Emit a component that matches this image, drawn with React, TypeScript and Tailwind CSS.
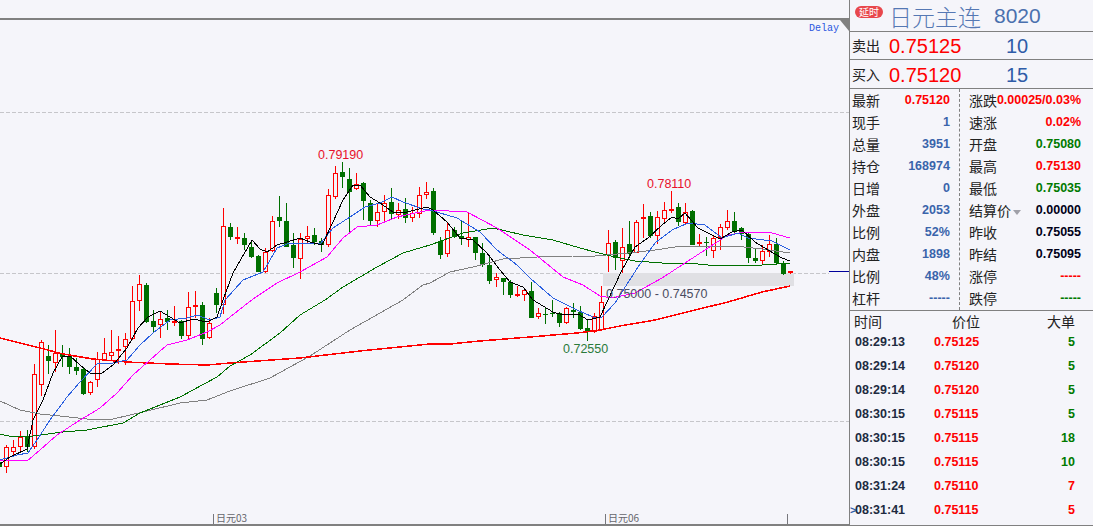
import React from "react";

// [high, bodyTop, bodyBottom, low, up]
const candles: number[][] = [
  [460, 462, 467, 469, 0], [445, 447, 467, 473, 1], [440, 447, 452, 457, 1], [431, 437, 447, 453, 1],
  [430, 436, 447, 452, 0], [364, 374, 447, 449, 1], [340, 342, 385, 396, 1], [345, 356, 361, 374, 0],
  [330, 353, 363, 372, 1], [345, 353, 357, 367, 0], [348, 356, 367, 374, 0], [358, 367, 371, 375, 0],
  [368, 369, 394, 395, 0], [381, 382, 393, 395, 1], [352, 359, 380, 387, 1], [338, 353, 360, 361, 1],
  [330, 352, 356, 360, 1], [336, 349, 350, 364, 1], [333, 339, 347, 365, 1], [286, 301, 339, 340, 1],
  [275, 284, 301, 311, 1], [283, 285, 322, 323, 0], [310, 321, 327, 332, 0], [312, 319, 325, 338, 1],
  [310, 318, 322, 330, 0], [306, 321, 322, 326, 1], [320, 321, 336, 339, 0], [292, 307, 336, 340, 1],
  [291, 305, 306, 318, 1], [302, 305, 339, 345, 0], [318, 323, 338, 339, 1], [288, 293, 305, 313, 0],
  [208, 226, 305, 314, 1], [223, 227, 237, 240, 0], [227, 237, 239, 244, 1], [233, 238, 245, 250, 0],
  [242, 247, 257, 258, 0], [255, 256, 272, 272, 0], [248, 252, 272, 273, 1], [216, 221, 251, 252, 1],
  [196, 217, 221, 227, 0], [203, 221, 247, 247, 0], [233, 245, 258, 268, 0], [233, 239, 259, 279, 1],
  [226, 236, 239, 244, 1], [228, 235, 242, 245, 0], [238, 241, 245, 252, 0], [189, 195, 245, 247, 1],
  [166, 173, 197, 199, 1], [162, 172, 177, 188, 0], [168, 179, 192, 233, 0], [173, 184, 189, 190, 1],
  [182, 183, 201, 220, 0], [200, 203, 221, 225, 0], [203, 212, 221, 227, 1], [195, 203, 212, 221, 1],
  [188, 202, 214, 220, 0], [203, 210, 215, 219, 1], [198, 209, 218, 223, 0], [207, 213, 218, 222, 1],
  [187, 195, 214, 218, 1], [182, 192, 195, 199, 1], [188, 191, 233, 235, 0], [237, 241, 255, 259, 0],
  [222, 230, 254, 257, 1], [227, 230, 237, 238, 0], [220, 236, 239, 245, 0], [213, 237, 240, 247, 1],
  [237, 237, 253, 260, 0], [243, 253, 265, 267, 0], [255, 265, 281, 284, 0], [273, 277, 280, 287, 1],
  [278, 278, 282, 295, 0], [280, 282, 295, 298, 0], [286, 294, 296, 297, 1], [288, 290, 295, 301, 1],
  [282, 291, 318, 318, 0], [308, 313, 317, 319, 1], [307, 314, 315, 324, 0], [300, 313, 314, 317, 0],
  [312, 313, 323, 327, 0], [307, 308, 323, 324, 1], [303, 310, 312, 318, 0], [306, 312, 329, 330, 0],
  [320, 328, 332, 341, 0], [313, 316, 332, 333, 1], [286, 302, 330, 331, 1], [230, 243, 255, 272, 1],
  [240, 242, 258, 270, 0], [228, 247, 261, 273, 1], [221, 244, 254, 257, 0], [220, 222, 253, 253, 1],
  [204, 217, 219, 238, 1], [212, 216, 236, 238, 0], [211, 217, 236, 244, 1], [202, 210, 219, 223, 1],
  [191, 209, 211, 213, 1], [203, 207, 222, 226, 0], [203, 212, 223, 225, 1], [210, 211, 245, 245, 0],
  [234, 242, 243, 246, 1], [237, 242, 243, 256, 0], [235, 238, 251, 258, 1], [224, 227, 238, 250, 1],
  [210, 221, 228, 230, 1], [212, 221, 232, 233, 0], [227, 228, 234, 240, 0], [232, 234, 258, 263, 0],
  [248, 258, 261, 263, 0], [245, 251, 261, 265, 1], [235, 244, 252, 257, 1], [238, 244, 263, 265, 0],
  [261, 263, 274, 275, 0], [271, 271, 272, 274, 1],
];

const maBlack = "0,464 10,457 27,449 33,420 43,400 53,373 62,357 70,356 80,365 90,373 102,373 113,365 127,348 138,328 148,317 160,311 170,317 180,323 193,319 207,322 217,317 223,300 233,273 252,240 260,249 267,252 277,245 287,242 300,238 310,242 322,245 333,222 343,200 353,185 360,185 370,197 380,203 393,212 407,212 427,207 433,210 447,222 460,238 473,240 487,253 500,270 510,282 523,287 533,300 553,312 563,315 578,314 588,320 600,317 622,270 635,247 648,238 662,225 672,217 678,219 685,213 698,228 720,239 732,232 742,230 755,242 768,250 782,258 790,261";
const maBlue = "0,460 17,455 28,453 37,440 50,420 67,397 80,382 97,364 113,363 127,360 140,345 153,333 170,320 187,318 197,315 210,320 220,317 225,300 243,280 263,272 277,248 290,243 320,244 333,228 350,217 365,207 380,203 392,197 403,202 423,209 430,210 457,218 480,232 497,250 517,265 530,278 553,298 577,310 593,317 602,317 615,303 638,267 655,243 672,230 688,223 705,225 722,238 738,233 748,238 772,241 790,250";
const maPink = "0,460 27,461 40,450 57,435 77,422 100,408 117,393 133,375 150,360 167,345 187,340 207,332 220,325 230,317 253,299 277,283 300,272 327,257 343,238 357,227 377,225 397,217 420,212 430,210 467,212 497,228 530,250 563,277 583,285 600,296 612,298 635,293 662,278 682,265 708,248 728,235 745,232 772,233 790,238";
const maGreen = "0,434 13,437 33,436 63,432 87,430 123,423 140,413 180,397 217,377 230,366 250,355 280,333 300,315 325,300 343,287 377,267 403,253 423,247 430,245 463,233 493,228 523,235 553,240 580,248 595,252 615,257 635,261 662,263 688,263 708,265 728,265 762,265 790,263";
const maGray = "0,401 20,410 40,414 60,416 87,419 113,419 143,412 180,403 207,400 230,391 270,378 310,356 350,330 403,300 423,285 430,283 450,272 473,267 503,259 537,257 573,256 595,256 628,253 655,250 682,246 708,247 735,246 762,249 790,253";
const maRed = "0,338 20,343 40,348 63,354 93,359 127,362 170,364 207,365 230,363 300,358 360,351 430,344 450,344 480,341 530,337 577,333 600,330 620,326 655,320 695,310 728,302 762,292 790,286";

const Candle = ({ c, i }: { c: number[]; i: number }) => {
  const [high, top, bottom, low, up] = c;
  const x = -1 + 7 * i;
  const color = up ? "#ff0000" : "#006f00";
  return (
    <g shapeRendering="crispEdges">
      <rect x={x} y={high} width={1} height={low - high} fill={color} />
      {up ? (
        <rect x={x - 1.5} y={top + 0.5} width={4} height={Math.max(bottom - top - 1, 1)} fill="#f5f5fa" stroke={color} />
      ) : (
        <rect x={x - 2} y={top} width={5} height={Math.max(bottom - top, 1)} fill={color} />
      )}
    </g>
  );
};

const RED = "text-[#ff0000]";
const BLUE = "text-[#3a64ab]";
const GREEN = "text-[#007a00]";
const DARK = "text-[#000018]";

const leftRows = [
  ["最新", "0.75120", RED],
  ["现手", "1", BLUE],
  ["总量", "3951", BLUE],
  ["持仓", "168974", BLUE],
  ["日增", "0", BLUE],
  ["外盘", "2053", BLUE],
  ["比例", "52%", BLUE],
  ["内盘", "1898", BLUE],
  ["比例", "48%", BLUE],
  ["杠杆", "-----", BLUE],
];

const rightRows = [
  ["涨跌", "0.00025/0.03%", RED],
  ["速涨", "0.02%", RED],
  ["开盘", "0.75080", GREEN],
  ["最高", "0.75130", RED],
  ["最低", "0.75035", GREEN],
  ["结算价", "0.00000", DARK],
  ["昨收", "0.75055", DARK],
  ["昨结", "0.75095", DARK],
  ["涨停", "-----", RED],
  ["跌停", "-----", GREEN],
];

const trades = [
  ["08:29:13", "0.75125", "5", GREEN],
  ["08:29:14", "0.75120", "5", GREEN],
  ["08:29:14", "0.75120", "5", GREEN],
  ["08:30:15", "0.75115", "5", GREEN],
  ["08:30:15", "0.75115", "18", GREEN],
  ["08:30:15", "0.75115", "10", GREEN],
  ["08:31:24", "0.75110", "7", RED],
  ["08:31:41", "0.75115", "5", RED],
];

const cjk = "font-['Noto_Sans_CJK_SC','Liberation_Sans',sans-serif]";
const num = "font-['Liberation_Sans',Arial,sans-serif]";

const App = () => {
  return (
    <div className={`flex w-[1093px] h-[526px] overflow-hidden bg-[#f5f5fa] ${num}`}>
      {/* chart */}
      <div className="w-[849px] h-[526px] pt-[18px] flex flex-col">
        <div className="border-t-2 border-[#808080] border-b-2 h-[508px]">
          <svg width="849" height="504" viewBox="0 20 849 504" className="block">
            <g stroke="#c6c6ca" strokeWidth="1" strokeDasharray="3.5 2.5" shapeRendering="crispEdges">
              <line x1="0" y1="112.5" x2="849" y2="112.5" />
              <line x1="0" y1="273.5" x2="829" y2="273.5" />
              <line x1="0" y1="421.5" x2="849" y2="421.5" />
            </g>
            <rect x="603" y="273" width="191" height="13" fill="#e0e0e4" />
            <rect x="829" y="271" width="20" height="1" fill="#00009c" />
            <polygon points="840,20 849,20 849,31" fill="#808080" />
            {candles.map((c, i) => (
              <Candle key={i} c={c} i={i} />
            ))}
            <g fill="none" strokeWidth="1" shapeRendering="crispEdges">
              <polyline points={maGray} stroke="#808080" />
              <polyline points={maGreen} stroke="#007000" />
              <polyline points={maRed} stroke="#ff0000" strokeWidth="1.5" />
              <polyline points={maPink} stroke="#ff00ff" />
              <polyline points={maBlue} stroke="#2a5fe0" />
              <polyline points={maBlack} stroke="#000000" />
            </g>
            <g fontFamily="'Liberation Sans', Arial, sans-serif" fontSize="12.5">
              <text x="318" y="159" fill="#e8102a">0.79190</text>
              <text x="647" y="188" fill="#e8102a">0.78110</text>
              <text x="563" y="353" fill="#2a7a3a">0.72550</text>
              <text x="606" y="298" fill="#4a4c60">0.75000 - 0.74570</text>
            </g>
            <text x="809" y="31" fill="#2a55e0" fontSize="10" fontFamily="'Liberation Mono', monospace">Delay</text>
            <g fill="#77777c" shapeRendering="crispEdges">
              <rect x="213" y="514" width="1" height="10" />
              <rect x="605" y="514" width="1" height="10" />
              <rect x="787" y="514" width="1" height="10" />
            </g>
            <g fontFamily="'Noto Sans CJK SC', sans-serif" fontSize="10" fill="#66666c">
              <text x="216" y="522">日元03</text>
              <text x="608" y="522">日元06</text>
            </g>
          </svg>
        </div>
      </div>

      {/* quote panel */}
      <div className="w-[244px] h-[526px] border-l border-[#808080] flex flex-col">
        <div className="h-[32px] border-b border-[#808080] flex items-center pl-[5px]">
          <span className={`w-[28px] h-[12px] rounded-full bg-[#e8474c] text-white text-[10px] leading-[12px] text-center mb-[8px] ${cjk}`}>延时</span>
          <span className={`ml-[6px] text-[23px] leading-[28px] text-[#5578b4] font-light ${cjk}`}>日元主连</span>
          <span className="ml-[13px] text-[21px] leading-[28px] text-[#4a70ae]">8020</span>
        </div>
        <div className="h-[28px] border-b border-[#808080] flex items-center pl-[2px]">
          <span className={`w-[37px] text-[14px] text-[#222] ${cjk}`}>卖出</span>
          <span className="w-[117px] text-[20px] leading-none text-[#ff0000]">0.75125</span>
          <span className="text-[20px] leading-none text-[#2f5ca8]">10</span>
        </div>
        <div className="h-[29px] border-b border-[#808080] flex items-center pl-[2px]">
          <span className={`w-[37px] text-[14px] text-[#222] ${cjk}`}>买入</span>
          <span className="w-[117px] mt-[2px] text-[20px] leading-none text-[#ff0000]">0.75120</span>
          <span className="mt-[2px] text-[20px] leading-none text-[#2f5ca8]">15</span>
        </div>

        <div className="h-[222px] border-b border-[#808080] flex">
          <div className="w-[112px] border-r border-dashed border-[#808080]">
            {leftRows.map((r, i) => (
              <div key={i} className="h-[22px] flex items-center justify-between pl-[2px] pr-[9px] whitespace-nowrap">
                <span className={`text-[14px] text-[#222] ${cjk}`}>{r[0]}</span>
                <span className={`text-[12.5px] font-bold ${r[2]}`}>{r[1]}</span>
              </div>
            ))}
          </div>
          <div className="flex-1">
            {rightRows.map((r, i) => (
              <div key={i} className="h-[22px] flex items-center pl-[9px] pr-[12px] whitespace-nowrap">
                <span className={`text-[14px] text-[#222] ${cjk}`}>{r[0]}</span>
                {r[0] === "结算价" && (
                  <span className="ml-[2px] mt-[4px] w-0 h-0 border-x-[4px] border-x-transparent border-t-[5px] border-t-[#a0a0a8]" />
                )}
                <span className={`ml-auto text-[12.5px] font-bold ${r[2]}`}>{r[1]}</span>
              </div>
            ))}
          </div>
        </div>

        <div className="h-[19px] pt-[2px] flex items-center pl-[4px] pr-[18px] text-[14px] text-[#222]">
          <span className={`w-[98px] ${cjk}`}>时间</span>
          <span className={`${cjk}`}>价位</span>
          <span className={`ml-auto ${cjk}`}>大单</span>
        </div>
        {trades.map((t, i) => (
          <div key={i} className="relative h-[24px] flex items-center pl-[5px] pr-[18px] text-[12.5px] font-bold">
            {i === 7 && <span className="absolute left-[0px] top-[5px] text-[11px] leading-[14px] text-[#2f5ca8]">&gt;</span>}
            <span className="w-[79px] text-[#202a40]">{t[0]}</span>
            <span className="text-[#ff0000]">{t[1]}</span>
            <span className={`ml-auto ${t[3]}`}>{t[2]}</span>
          </div>
        ))}
        <div className="flex-1 border-b border-[#808080]" />
      </div>
    </div>
  );
};

export default App;
